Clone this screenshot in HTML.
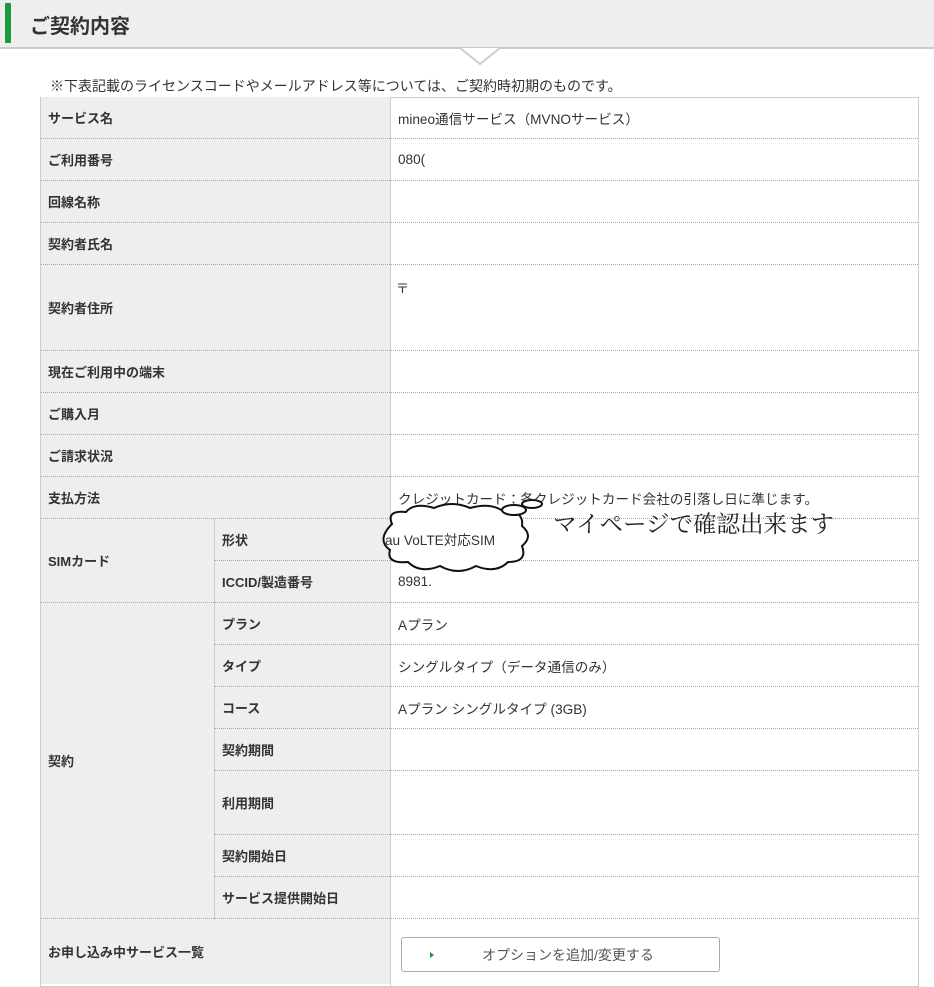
<!DOCTYPE html>
<html><head><meta charset="utf-8"><style>
body{margin:0;width:934px;height:984px;overflow:hidden;background:#fff;font-family:"Liberation Sans","Noto Sans CJK JP",sans-serif;color:#333;position:relative}
.a{position:absolute}
.hd{left:0;top:0;width:934px;height:47px;background:#eee;border-bottom:2px solid #ccc}
.l{background:#eee;font-weight:bold;font-size:13px;display:flex;align-items:center;padding-left:7px;box-sizing:border-box;border-bottom:1px dotted #aaa}
.v{font-size:13.6px;display:flex;align-items:center;padding-left:7px;box-sizing:border-box;border-bottom:1px dotted #aaa}
</style></head><body>
<div class="a hd"></div>
<div class="a" style="left:5px;top:3px;width:6px;height:40px;background:#1a9b3c"></div>
<div class="a" style="left:30px;top:10px;font-size:20px;font-weight:bold;color:#333">ご契約内容</div>
<svg class="a" style="left:460px;top:46px" width="40" height="20"><path d="M0 2 L20 18 L40 2" fill="#fff" stroke="#ccc" stroke-width="2"/></svg>
<div class="a" style="left:50px;top:76px;font-size:14px">※下表記載のライセンスコードやメールアドレス等については、ご契約時初期のものです。</div>
<div class="a" style="left:40px;top:97px;width:879px;height:890px;border:1px solid #ccc;box-sizing:border-box"></div>
<div class="a" style="left:390px;top:97px;width:1px;height:890px;background:#ccc"></div>
<div id="t"></div>
<script>
var R=[[97,42,'サービス名','mineo通信サービス（MVNOサービス）'],[139,42,'ご利用番号','080('],[181,42,'回線名称',''],[223,42,'契約者氏名',''],[265,86,'契約者住所',''],[351,42,'現在ご利用中の端末',''],[393,42,'ご購入月',''],[435,42,'ご請求状況',''],[477,42,'支払方法','クレジットカード：各クレジットカード会社の引落し日に準じます。']];
var S=[[519,42,'形状',''],[561,42,'ICCID/製造番号','8981.'],[603,42,'プラン','Aプラン'],[645,42,'タイプ','シングルタイプ（データ通信のみ）'],[687,42,'コース','Aプラン シングルタイプ (3GB)'],[729,42,'契約期間',''],[771,64,'利用期間',''],[835,42,'契約開始日',''],[877,42,'サービス提供開始日','']];
var h='';
R.forEach(function(r){h+='<div class="a l" style="left:41px;top:'+r[0]+'px;width:349px;height:'+r[1]+'px">'+r[2]+'</div><div class="a v" style="left:391px;top:'+r[0]+'px;width:527px;height:'+r[1]+'px">'+r[3]+'</div>';});
h+='<div class="a l" style="left:41px;top:519px;width:173px;height:84px">SIMカード</div>';
h+='<div class="a l" style="left:41px;top:603px;width:173px;height:316px">契約</div>';
S.forEach(function(r){h+='<div class="a l" style="left:214px;top:'+r[0]+'px;width:176px;height:'+r[1]+'px;border-left:1px solid #ccc">'+r[2]+'</div><div class="a v" style="left:391px;top:'+r[0]+'px;width:527px;height:'+r[1]+'px">'+r[3]+'</div>';});
h+='<div class="a l" style="left:41px;top:919px;width:349px;height:65px;border:0">お申し込み中サービス一覧</div>';
document.getElementById('t').innerHTML=h;
</script>
<div class="a" style="left:396px;top:278px;font-size:13px">〒</div>
<svg class="a" style="left:372px;top:496px" width="180" height="82"><g fill="#fff" stroke="#111" stroke-width="2">
<path d="M20 28 Q14 14 34 16 Q42 6 62 12 Q80 4 98 12 Q120 6 132 16 Q152 14 150 30 Q162 40 150 50 Q156 66 136 66 Q124 78 104 70 Q86 80 68 70 Q48 78 36 66 Q14 68 18 54 Q4 44 20 28 Z"/>
<ellipse cx="142" cy="14" rx="12" ry="5"/><ellipse cx="160" cy="8" rx="10" ry="4"/></g>
<text x="13" y="49" font-size="13.6" fill="#333" font-family="Liberation Sans,Noto Sans CJK JP,sans-serif">au VoLTE対応SIM</text></svg>
<div class="a" style="left:553px;top:505px;font-size:23.5px;font-family:'Noto Serif CJK SC',serif;color:#222">マイページで確認出来ます</div>
<div class="a" style="left:401px;top:937px;width:319px;height:35px;border:1px solid #aaa;border-radius:3px;box-sizing:border-box;font-size:14px;color:#555;display:flex;align-items:center;justify-content:center;padding-left:15px">オプションを追加/変更する</div>
<div class="a" style="left:430px;top:952px;width:0;height:0;border-left:4px solid #1a9b3c;border-top:3px solid transparent;border-bottom:3px solid transparent"></div>
</body></html>
